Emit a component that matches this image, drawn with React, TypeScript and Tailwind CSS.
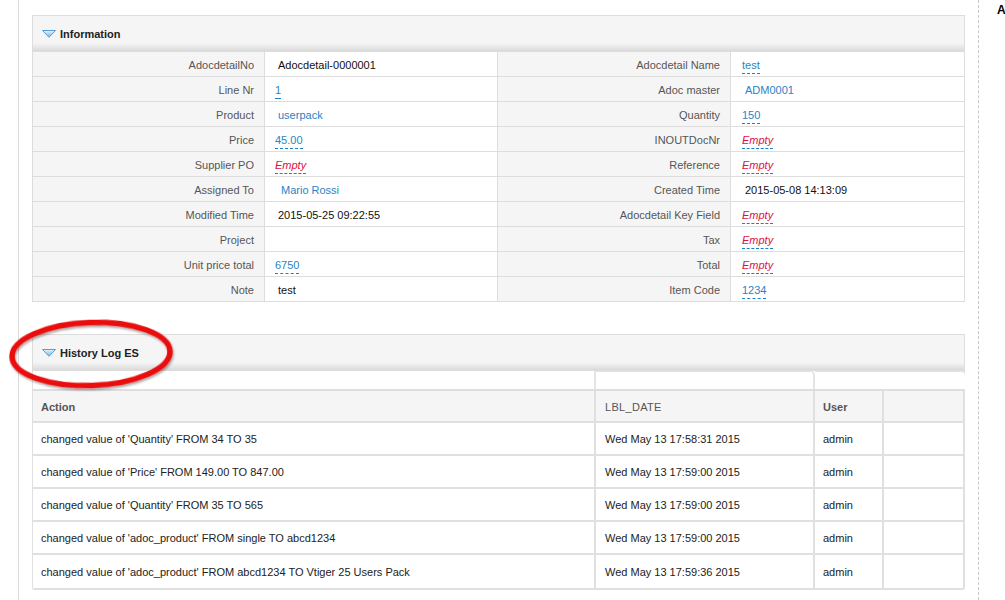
import React from "react";

type Kind = "plain" | "edit" | "empty" | "link";
type V = { t?: string; kind: Kind; ml?: number };

const E: V = { kind: "empty" };

const rows: [string, V, string, V][] = [
  ["AdocdetailNo", { t: "Adocdetail-0000001", kind: "plain" }, "Adocdetail Name", { t: "test", kind: "edit" }],
  ["Line Nr", { t: "1", kind: "edit" }, "Adoc master", { t: "ADM0001", kind: "link" }],
  ["Product", { t: "userpack", kind: "link" }, "Quantity", { t: "150", kind: "edit" }],
  ["Price", { t: "45.00", kind: "edit" }, "INOUTDocNr", E],
  ["Supplier PO", E, "Reference", E],
  ["Assigned To", { t: "Mario Rossi", kind: "link", ml: 6 }, "Created Time", { t: "2015-05-08 14:13:09", kind: "plain" }],
  ["Modified Time", { t: "2015-05-25 09:22:55", kind: "plain" }, "Adocdetail Key Field", E],
  ["Project", { t: "", kind: "plain" }, "Tax", E],
  ["Unit price total", { t: "6750", kind: "edit" }, "Total", E],
  ["Note", { t: "test", kind: "plain" }, "Item Code", { t: "1234", kind: "edit" }],
];

const hist: [string, string][] = [
  ["changed value of 'Quantity' FROM 34 TO 35", "Wed May 13 17:58:31 2015"],
  ["changed value of 'Price' FROM 149.00 TO 847.00", "Wed May 13 17:59:00 2015"],
  ["changed value of 'Quantity' FROM 35 TO 565", "Wed May 13 17:59:00 2015"],
  ["changed value of 'adoc_product' FROM single TO abcd1234", "Wed May 13 17:59:00 2015"],
  ["changed value of 'adoc_product' FROM abcd1234 TO Vtiger 25 Users Pack", "Wed May 13 17:59:36 2015"],
];

function Tri({ id }: { id: string }) {
  return (
    <svg width="14" height="8" viewBox="0 0 14 8" className="shrink-0">
      <defs>
        <linearGradient id={id} x1="0" y1="0" x2="0" y2="1">
          <stop offset="0" stopColor="#e6f3fd" />
          <stop offset="1" stopColor="#72b2e8" />
        </linearGradient>
      </defs>
      <polygon
        points="0.5,0.5 13.5,0.5 7,7.3"
        fill={`url(#${id})`}
        stroke="#5b9bd5"
        strokeWidth="1"
        strokeLinejoin="round"
      />
    </svg>
  );
}

function SectionHeader({ title, id }: { title: string; id: string }) {
  return (
    <div className="h-[37px] border border-[#dddddd] bg-[linear-gradient(to_bottom,#f5f5f5_0%,#f5f5f5_78%,#dadada_100%)] flex items-center pl-[9px] gap-[4px] pt-[1px]">
      <Tri id={id} />
      <span className="text-[11px] font-bold text-[#222222] pt-[1px]">{title}</span>
    </div>
  );
}

function Value({ v }: { v: V }) {
  if (v.kind === "empty")
    return (
      <span className="italic text-[#dd1144] border-b border-dashed border-[#1a82c8]">Empty</span>
    );
  if (v.kind === "edit")
    return <span className="text-[#2a83c6] border-b border-dashed border-[#1a82c8]">{v.t}</span>;
  if (v.kind === "link")
    return (
      <span className="text-[#2a83c6]" style={{ marginLeft: v.ml ?? 3 }}>
        {v.t}
      </span>
    );
  return <span className="ml-[3px] text-[#111111]">{v.t}</span>;
}

export default function App() {
  return (
    <div className="relative w-[1005px] h-[600px] overflow-hidden bg-white flex font-['Liberation_Sans',Arial,sans-serif] text-[11px]">
      <div className="w-[978px] h-full pl-[18px] shrink-0">
        <div className="h-full border-l border-[#dcdcdc] pl-[13px] pr-[13px] pt-[15px]">
          {/* Information */}
          <SectionHeader title="Information" id="t1" />
          <div className="border-l border-[#dddddd]">
            {rows.map((r, i) => (
              <div
                key={i}
                className="grid grid-cols-[232px_233px_233px_234px] h-[25px] border-b border-[#dddddd]"
              >
                <div className="bg-[#f5f5f5] border-r border-[#dddddd] flex items-center justify-end pr-[10px] pt-[3px] text-[#555555]">
                  {r[0]}
                </div>
                <div className="bg-white border-r border-[#dddddd] flex items-center pl-[10px] pt-[3px]">
                  <Value v={r[1]} />
                </div>
                <div className="bg-[#f5f5f5] border-r border-[#dddddd] flex items-center justify-end pr-[10px] pt-[3px] text-[#555555]">
                  {r[2]}
                </div>
                <div className="bg-white border-r border-[#dddddd] flex items-center pl-[11px] pt-[3px]">
                  <Value v={r[3]} />
                </div>
              </div>
            ))}
          </div>

          {/* History Log ES */}
          <div className="mt-[32px]">
            <SectionHeader title="History Log ES" id="t2" />
            <div className="border-l border-r-2 border-b-2 border-[#e0e0e0] rounded-b-[3px]">
              <div className="grid grid-cols-[563px_219px_150px] h-[20px] border-b-2 border-[#dedede]">
                <div className="bg-white border-r-2 border-[#e4e4e4]" />
                <div className="bg-white border-r-2 border-t border-[#e4e4e4] rounded-tr-[4px]" />
                <div className="bg-white border-t border-[#e4e4e4] rounded-tr-[4px]" />
              </div>
              <div className="grid grid-cols-[563px_219px_69px_80px] h-[32px] border-b-2 border-[#e0e0e0] bg-[#f5f5f5] text-[#555555]">
                <div className="flex items-center pl-[8px] pt-[2px] font-bold border-r-2 border-[#e0e0e0]">Action</div>
                <div className="flex items-center pl-[9px] pt-[2px] border-r-2 border-[#e0e0e0] tracking-[0.3px]">LBL_DATE</div>
                <div className="flex items-center pl-[8px] pt-[2px] font-bold border-r-2 border-[#e0e0e0]">User</div>
                <div />
              </div>
              {hist.map((h, i) => (
                <div
                  key={i}
                  className={`grid grid-cols-[563px_219px_69px_80px] h-[33px] bg-white text-[#222222] ${
                    i < hist.length - 1 ? "border-b-2 border-[#e0e0e0]" : ""
                  }`}
                >
                  <div className="flex items-center pl-[8px] pt-[2px] border-r-2 border-[#e0e0e0]">{h[0]}</div>
                  <div className="flex items-center pl-[9px] pt-[2px] border-r-2 border-[#e0e0e0]">{h[1]}</div>
                  <div className="flex items-center pl-[8px] pt-[2px] border-r-2 border-[#e0e0e0]">admin</div>
                  <div />
                </div>
              ))}
            </div>
          </div>
        </div>
      </div>

      {/* right side panel */}
      <div className="h-full border-l border-dashed border-[#c8c8c8] pl-[18px] pt-[1px] whitespace-nowrap">
        <span className="text-[12px] font-bold text-black">A</span>
      </div>

      {/* red annotation ellipse */}
      <svg
        className="absolute left-0 top-[312px] pointer-events-none"
        width="190"
        height="90"
        viewBox="0 0 190 90"
      >
        <defs>
          <filter id="sh" x="-10%" y="-10%" width="120%" height="130%">
            <feDropShadow dx="1" dy="2" stdDeviation="1.2" floodColor="#000" floodOpacity="0.35" />
          </filter>
        </defs>
        <ellipse
          cx="91"
          cy="42"
          rx="79"
          ry="31.5"
          fill="none"
          stroke="#ea0b0b"
          strokeWidth="5.5"
          transform="rotate(-2 91 42)"
          filter="url(#sh)"
        />
      </svg>
    </div>
  );
}
